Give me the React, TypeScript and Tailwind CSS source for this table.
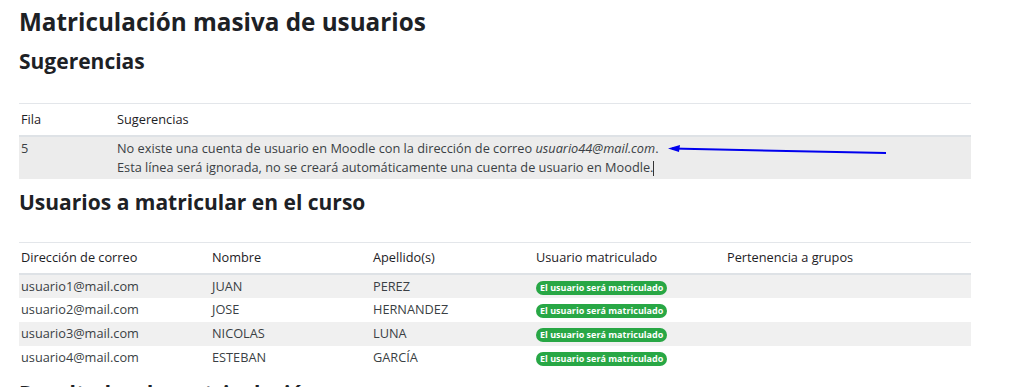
const usuarios = [
  { correo: 'usuario1@mail.com', nombre: 'JUAN', apellido: 'PEREZ' },
  { correo: 'usuario2@mail.com', nombre: 'JOSE', apellido: 'HERNANDEZ' },
  { correo: 'usuario3@mail.com', nombre: 'NICOLAS', apellido: 'LUNA' },
  { correo: 'usuario4@mail.com', nombre: 'ESTEBAN', apellido: 'GARCÍA' },
];

export default function App() {
  return (
    <div className="h-[387px] overflow-hidden bg-white pl-[19px] pr-[53px] text-[#1d2125] font-['Open_Sans',sans-serif]">
      <h1 className="pt-[6px] text-[24.25px] font-bold leading-[32px]">Matriculación masiva de usuarios</h1>
      <h2 className="mt-[11px] text-[21px] font-bold leading-[24px]">Sugerencias</h2>

      <table className="mt-[30px] w-full border-t border-[#e3e6ea] text-[12.75px] text-[#3a3f44]">
        <thead>
          <tr className="h-[32px] border-b-2 border-[#dee2e6]">
            <th className="w-[98px] pl-[2px] text-left font-normal text-[#1d2125]">Fila</th>
            <th className="text-left font-normal text-[#1d2125]">Sugerencias</th>
          </tr>
        </thead>
        <tbody>
          <tr className="bg-[#ececec] align-top">
            <td className="pl-[2px] pt-[2px] leading-[19px]">5</td>
            <td className="relative pt-[2px] pb-[2px] leading-[19px]">
              No existe una cuenta de usuario en Moodle con la dirección de correo <i>usuario44@mail.com</i>.
              <br />
              Esta línea será ignorada, no se creará automáticamente una cuenta de usuario en Moodle.
              <span className="inline-block h-[15px] w-px bg-[#333] align-middle" />
              <svg className="absolute left-[551px] top-[7px]" width="220" height="12" viewBox="0 0 220 12">
                <path d="M4 4.5 L218 9" stroke="#0000ee" strokeWidth="2" fill="none" />
                <path d="M0 4.4 L12 1 L11 8 Z" fill="#0000ee" />
              </svg>
            </td>
          </tr>
        </tbody>
      </table>

      <h2 className="mt-[11px] text-[21px] font-bold leading-[24px]">Usuarios a matricular en el curso</h2>

      <table className="mt-[28px] w-full border-t border-[#e3e6ea] text-[12.75px] text-[#3a3f44]">
        <thead>
          <tr className="h-[32px] border-b-2 border-[#dee2e6] text-[#1d2125]">
            <th className="w-[193px] pl-[2px] text-left font-normal">Dirección de correo</th>
            <th className="w-[161px] text-left font-normal">Nombre</th>
            <th className="w-[163px] text-left font-normal">Apellido(s)</th>
            <th className="w-[191px] text-left font-normal">Usuario matriculado</th>
            <th className="text-left font-normal">Pertenencia a grupos</th>
          </tr>
        </thead>
        <tbody>
          {usuarios.map((u, i) => (
            <tr key={u.correo} className={i % 2 === 0 ? 'h-[24px] bg-[#f0f0f0]' : 'h-[24px] bg-white'}>
              <td className="pl-[2px]">{u.correo}</td>
              <td>{u.nombre}</td>
              <td>{u.apellido}</td>
              <td>
                <span className="inline-block rounded-full bg-[#28a745] px-[4px] text-[9px] font-bold leading-[14px] text-white">
                  El usuario será matriculado
                </span>
              </td>
              <td />
            </tr>
          ))}
        </tbody>
      </table>

      <h2 className="mt-[11px] text-[21px] font-bold leading-[24px]">Resultados de matriculación</h2>
    </div>
  );
}
